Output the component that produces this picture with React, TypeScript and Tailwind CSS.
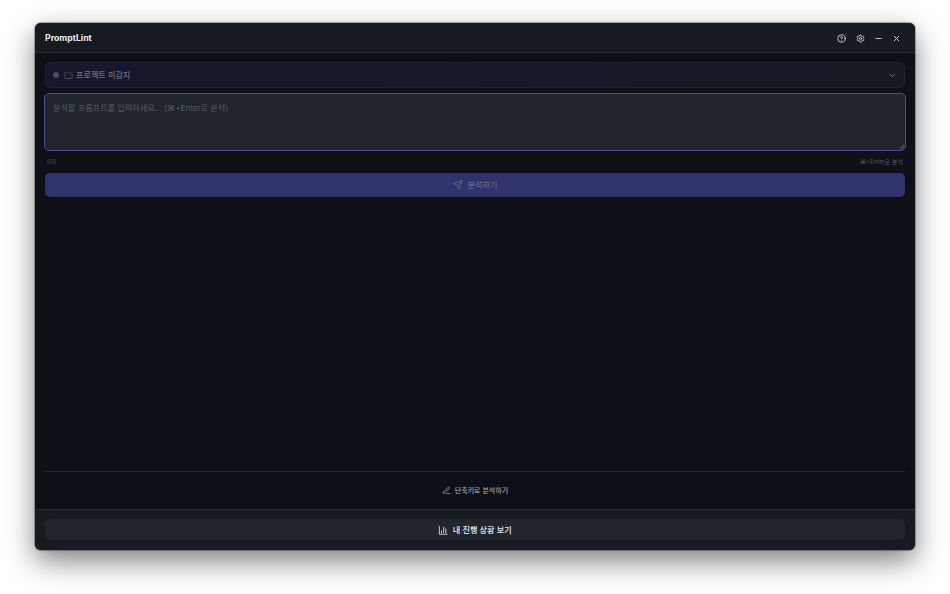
import { ChevronDown, CircleHelp, Folder, Minus, Settings, X } from 'lucide-react';

const stroke = {
  viewBox: '0 0 24 24',
  fill: 'none',
  stroke: 'currentColor',
  strokeWidth: 2,
  strokeLinecap: 'round' as const,
  strokeLinejoin: 'round' as const,
};

function SendIcon() {
  return (
    <svg {...stroke} className="size-[10px]">
      <path d="M22 2 11 13M22 2l-7 20-4-9-9-4Z" />
    </svg>
  );
}

function PenIcon() {
  return (
    <svg {...stroke} className="size-[9px]">
      <path d="M12 20h9M16.5 3.5a2.12 2.12 0 0 1 3 3L7 19l-4 1 1-4Z" />
    </svg>
  );
}

function ChartIcon() {
  return (
    <svg {...stroke} className="size-[10.5px]">
      <path d="M3 3v18h18M18 17V9M13 17V5M8 17v-3" />
    </svg>
  );
}

function TitleBar() {
  return (
    <header className="flex h-[30px] shrink-0 items-center justify-between border-b border-[#282d34] bg-[#161b22] pl-[10px] pr-[14px] pt-px text-[#d0d6dc]">
      <h1 className="text-[8.7px] font-bold leading-none text-[#e6edf3]">PromptLint</h1>
      <div className="flex items-center gap-[9.25px]">
        <CircleHelp size={9} strokeWidth={2.4} />
        <Settings size={9} strokeWidth={2.4} />
        <Minus size={9} strokeWidth={2.4} />
        <X size={9} strokeWidth={2.6} />
      </div>
    </header>
  );
}

export default function App() {
  return (
    <div className="h-[594px] w-[950px] overflow-hidden bg-white px-[35px] pt-[23px] font-[Inter,'Noto_Sans_CJK_KR',sans-serif]">
      <div className="flex h-[527px] w-[880px] flex-col overflow-hidden rounded-[6px] bg-[#0d1117] shadow-[0_0_1px_1px_rgba(0,0,0,0.3),0_11px_29px_rgba(0,0,0,0.5)]">
        <TitleBar />
        <main className="flex grow flex-col px-[10px] pt-[9px]">
          <div className="flex h-[26px] shrink-0 items-center rounded-[5px] border border-[#1f2338] bg-linear-to-r from-[#15182d] to-[#161922] pl-[7px] pr-[7px] text-[#6f737d]">
            <span className="size-[6px] rounded-full bg-[#4a4d5b]" />
            <Folder size={9} className="ml-[5px] text-[#555966]" />
            <span className="ml-[3px] grow text-[8.1px] font-medium leading-none">프로젝트 미감지</span>
            <ChevronDown size={9} className="text-[#8b949e]" />
          </div>
          <div className="relative -mx-[1px] mt-[5px] h-[58px] shrink-0 rounded-[5px] border-[1.5px] border-[#4b4b96] bg-[#21262d] px-[8px] pt-[9px] text-[8.13px] leading-[10px] text-[#555b64]">
            분석할 프롬프트를 입력하세요... (⌘+Enter로 분석)
            <svg className="absolute bottom-0 right-0 size-[6px] text-[#a0a3aa]" viewBox="0 0 6 6" fill="none" stroke="currentColor" strokeWidth="0.6">
              <path d="M1 5 5 1M3.5 5 5 3.5" />
            </svg>
          </div>
          <div className="mt-[7px] flex h-[8px] shrink-0 items-center justify-between px-[2px] text-[6px] leading-none text-[#50575f]">
            <span>0자</span>
            <span>⌘+Enter로 분석</span>
          </div>
          <button className="mt-[7px] flex h-[24px] shrink-0 items-center justify-center gap-[5px] rounded-[5px] bg-[#30336e] text-[8.1px] font-medium leading-none text-[#686a82]">
            <SendIcon />
            분석하기
          </button>
          <div className="grow" />
          <div className="flex h-[38px] shrink-0 items-center justify-center gap-[4px] border-t border-[#242930] text-[7px] font-medium leading-none text-[#a0a7b0]">
            <PenIcon />
            단축키로 분석하기
          </div>
        </main>
        <footer className="h-[41px] shrink-0 border-t border-[#282d34] bg-[#161b22] px-[10px] pt-[9px]">
          <button className="flex h-[21px] w-full items-center justify-center gap-[4px] rounded-[5px] bg-[#21262d] pt-px text-[8.15px] font-medium leading-none text-[#e6edf3]">
            <ChartIcon />
            내 진행 상황 보기
          </button>
        </footer>
      </div>
    </div>
  );
}
